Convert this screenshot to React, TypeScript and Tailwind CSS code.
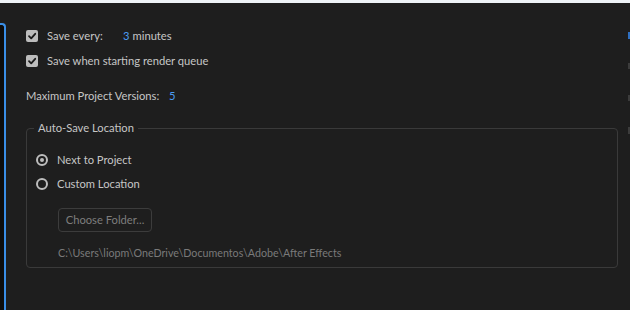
import React from 'react';

const Check = () => (
  <span className="w-[12px] h-[12px] rounded-[2px] bg-[#bdbdbd] flex items-center justify-center shrink-0">
    <svg width="10" height="10" viewBox="0 0 10 10">
      <path d="M2 5.2 L4.2 7.4 L8.2 2.8" fill="none" stroke="#1b1b1b" strokeWidth="1.8" strokeLinecap="round" strokeLinejoin="round" />
    </svg>
  </span>
);

const Radio: React.FC<{ on?: boolean }> = ({ on }) => (
  <span className="w-[12px] h-[12px] rounded-full border-2 border-[#bdbdbd] flex items-center justify-center shrink-0">
    {on && <span className="w-[4px] h-[4px] rounded-full bg-[#bdbdbd]" />}
  </span>
);

export default function App() {
  return (
    <div
      className="w-[630px] h-[310px] bg-[#1e1e1e] flex flex-col overflow-hidden text-[11.2px] text-[#c6c6c6]"
      style={{ fontFamily: 'Lato, "Open Sans", sans-serif' }}
    >
      <div className="h-[3px] bg-[#eef2f7] shrink-0" />
      <div className="flex flex-1">
        {/* left panel edge */}
        <div className="w-[6px] pt-[20px] shrink-0">
          <div className="h-full bg-[#0d0d0d] border-t-2 border-r-2 border-[#3a8ee6] rounded-tr-[4px]" />
        </div>

        {/* content */}
        <div className="flex-1 pl-[20px] pr-[10px] pt-[26px] flex flex-col">
          <div className="flex items-center h-[14px]">
            <Check />
            <span className="ml-[9px] w-[76px]">Save every:</span>
            <span className="text-[#4b9cf2]">3</span>
            <span className="ml-[3px]">minutes</span>
          </div>
          <div className="flex items-center h-[14px] mt-[11px]">
            <Check />
            <span className="ml-[9px]">Save when starting render queue</span>
          </div>
          <div className="flex items-center h-[14px] mt-[21px]">
            <span className="w-[143px]">Maximum Project Versions:</span>
            <span className="text-[#4b9cf2]">5</span>
          </div>

          <div className="relative mt-[25px] h-[140px] border border-[#3a3a3a] rounded-[4px] flex flex-col pl-[9px] pt-[24px]">
            <span className="absolute left-[7px] top-[-8px] px-[4px] bg-[#1e1e1e] leading-[14px]">Auto-Save Location</span>
            <div className="flex items-center h-[14px]">
              <Radio on />
              <span className="ml-[9px]">Next to Project</span>
            </div>
            <div className="flex items-center h-[14px] mt-[10px]">
              <Radio />
              <span className="ml-[9px]">Custom Location</span>
            </div>
            <button className="mt-[17px] ml-[22px] w-[94px] h-[24px] border border-[#3c3c3c] rounded-[4px] text-[#7d7d7d] flex items-center justify-center">
              Choose Folder...
            </button>
            <span className="mt-[14px] ml-[22px] h-[14px] flex items-center text-[10.7px] text-[#7a7a7a]">C:\Users\liopm\OneDrive\Documentos\Adobe\After Effects</span>
          </div>
        </div>

        {/* right edge fragments */}
        <div className="w-[2px] flex flex-col shrink-0 pt-[29px]">
          <div className="h-[7px] bg-[#2f6fc0]" />
          <div className="h-[6px] bg-[#3c3c3c] mt-[24px]" />
          <div className="h-[6px] bg-[#3c3c3c] mt-[26px]" />
          <div className="h-[7px] bg-[#3c3c3c] mt-[26px]" />
        </div>
      </div>
    </div>
  );
}
